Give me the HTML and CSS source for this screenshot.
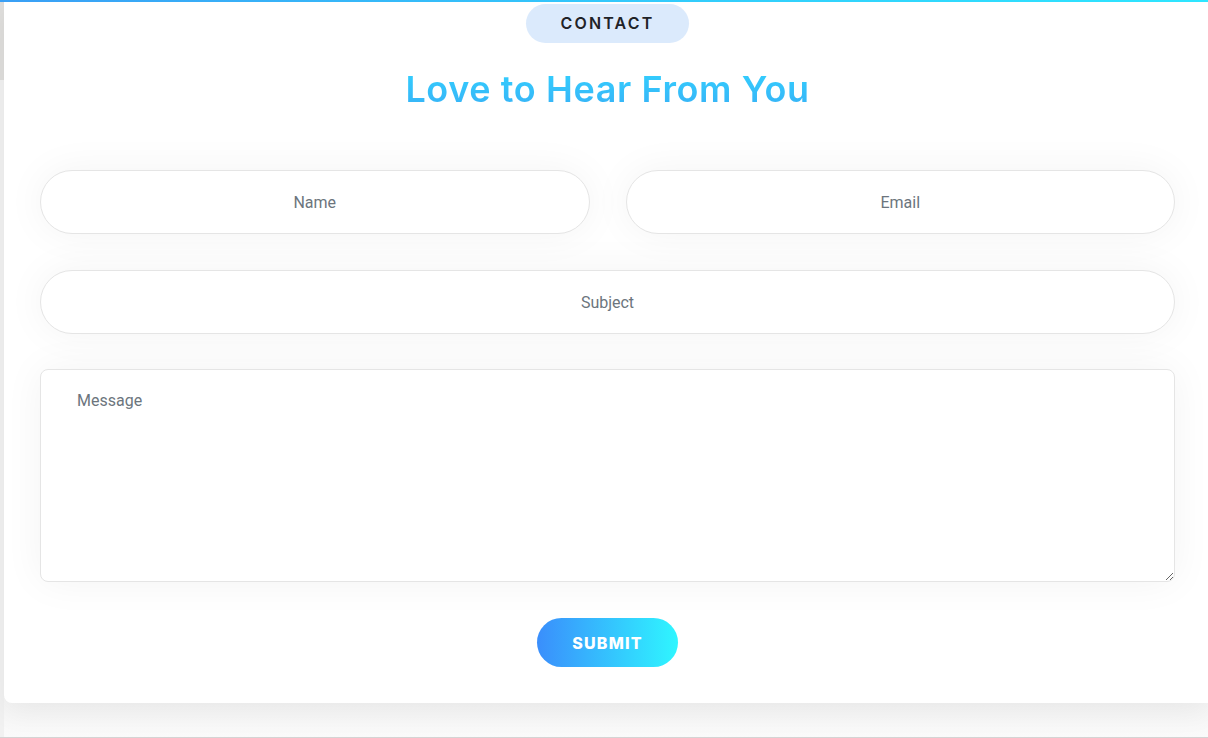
FILE: index.html
```html
<!DOCTYPE html>
<html lang="en">
<head>
<meta charset="utf-8">
<title>Contact</title>
<link rel="stylesheet" href="styles.css">
</head>
<body>
<div class="topbar"></div>
<div class="page">
  <div class="rail"></div>
  <section class="card">
    <div class="inner">
      <span class="pill">CONTACT</span>
      <h2 class="title">Love to Hear From You</h2>
      <form class="form">
        <div class="row">
          <input class="field" type="text" placeholder="Name">
          <input class="field" type="email" placeholder="Email">
        </div>
        <input class="field" type="text" placeholder="Subject">
        <textarea class="message" placeholder="Message"></textarea>
        <button class="submit" type="button">SUBMIT</button>
      </form>
    </div>
  </section>
</div>
</body>
</html>
```

FILE: styles.css
```css
html, body {
  margin: 0;
  padding: 0;
}
body {
  width: 1208px;
  height: 738px;
  overflow: hidden;
  background: #f6f6f6;
  font-family: Roboto, "Liberation Sans", sans-serif;
}
.topbar {
  height: 2px;
  background: linear-gradient(90deg, #3a9ff5 0%, #33c8fb 50%, #2ee6ff 100%);
  position: relative;
  z-index: 2;
}
.page {
  display: flex;
  height: 735px;
  border-bottom: 1px solid #d4d4d4;
  background: linear-gradient(180deg, #f4f4f4 0%, #f4f4f4 94%, #fafafa 100%);
}
.rail {
  width: 4px;
  flex: 0 0 4px;
  background: linear-gradient(180deg, #dfdedc 0, #dfdedc 78px, #f1f1f1 78px);
}
.card {
  flex: 1;
  height: 701px;
  background: #fff;
  border-radius: 0 0 0 8px;
  box-shadow: 0 8px 30px rgba(0, 0, 0, 0.06);
  position: relative;
  z-index: 1;
}
.inner {
  width: 1135px;
  margin-left: 36px;
  padding-top: 2px;
  display: flex;
  flex-direction: column;
  align-items: center;
}
.pill {
  display: flex;
  align-items: center;
  justify-content: center;
  width: 163px;
  height: 39px;
  border-radius: 20px;
  background: #dbeafc;
  color: #1f2328;
  font-family: Inter, "Open Sans", sans-serif;
  font-size: 16px;
  font-weight: 600;
  letter-spacing: 2.2px;
  padding-top: 0;
  line-height: 37px;
}
.title {
  margin: 24px 0 0;
  font-family: Inter, "Open Sans", sans-serif;
  font-size: 36px;
  font-weight: 600;
  line-height: 44px;
  letter-spacing: 0.6px;
  background: linear-gradient(180deg, #32d2ff 0%, #38b0f6 100%);
  -webkit-background-clip: text;
  background-clip: text;
  color: transparent;
}
.form {
  width: 100%;
  margin-top: 59px;
  display: flex;
  flex-direction: column;
  align-items: center;
  gap: 36px;
}
.row {
  width: 100%;
  display: flex;
  gap: 36px;
}
.field {
  box-sizing: border-box;
  width: 100%;
  height: 64px;
  border: 1px solid #e5e5e5;
  border-radius: 32px;
  background: #fff;
  box-shadow: 0 0 40px rgba(0, 0, 0, 0.05);
  text-align: center;
  font-family: Roboto, "Liberation Sans", sans-serif;
  font-size: 16px;
  color: #495057;
  outline: none;
}
.row .field {
  flex: 1;
}
.field::placeholder,
.message::placeholder {
  color: #6c757d;
  opacity: 1;
}
.message {
  box-sizing: border-box;
  width: 100%;
  height: 213px;
  border: 1px solid #e5e5e5;
  border-radius: 8px;
  background: #fff;
  box-shadow: 0 0 40px rgba(0, 0, 0, 0.05);
  padding: 20px 36px;
  font-family: Roboto, "Liberation Sans", sans-serif;
  font-size: 16px;
  line-height: 22px;
  color: #495057;
  outline: none;
  margin-top: -1px;
}
.submit {
  width: 141px;
  height: 49px;
  border: none;
  border-radius: 25px;
  background: linear-gradient(90deg, #3a8efc 0%, #2ff6ff 100%);
  color: #fff;
  font-family: Inter, "Open Sans", sans-serif;
  font-size: 16px;
  font-weight: 800;
  letter-spacing: 1.2px;
  cursor: pointer;
}
```
